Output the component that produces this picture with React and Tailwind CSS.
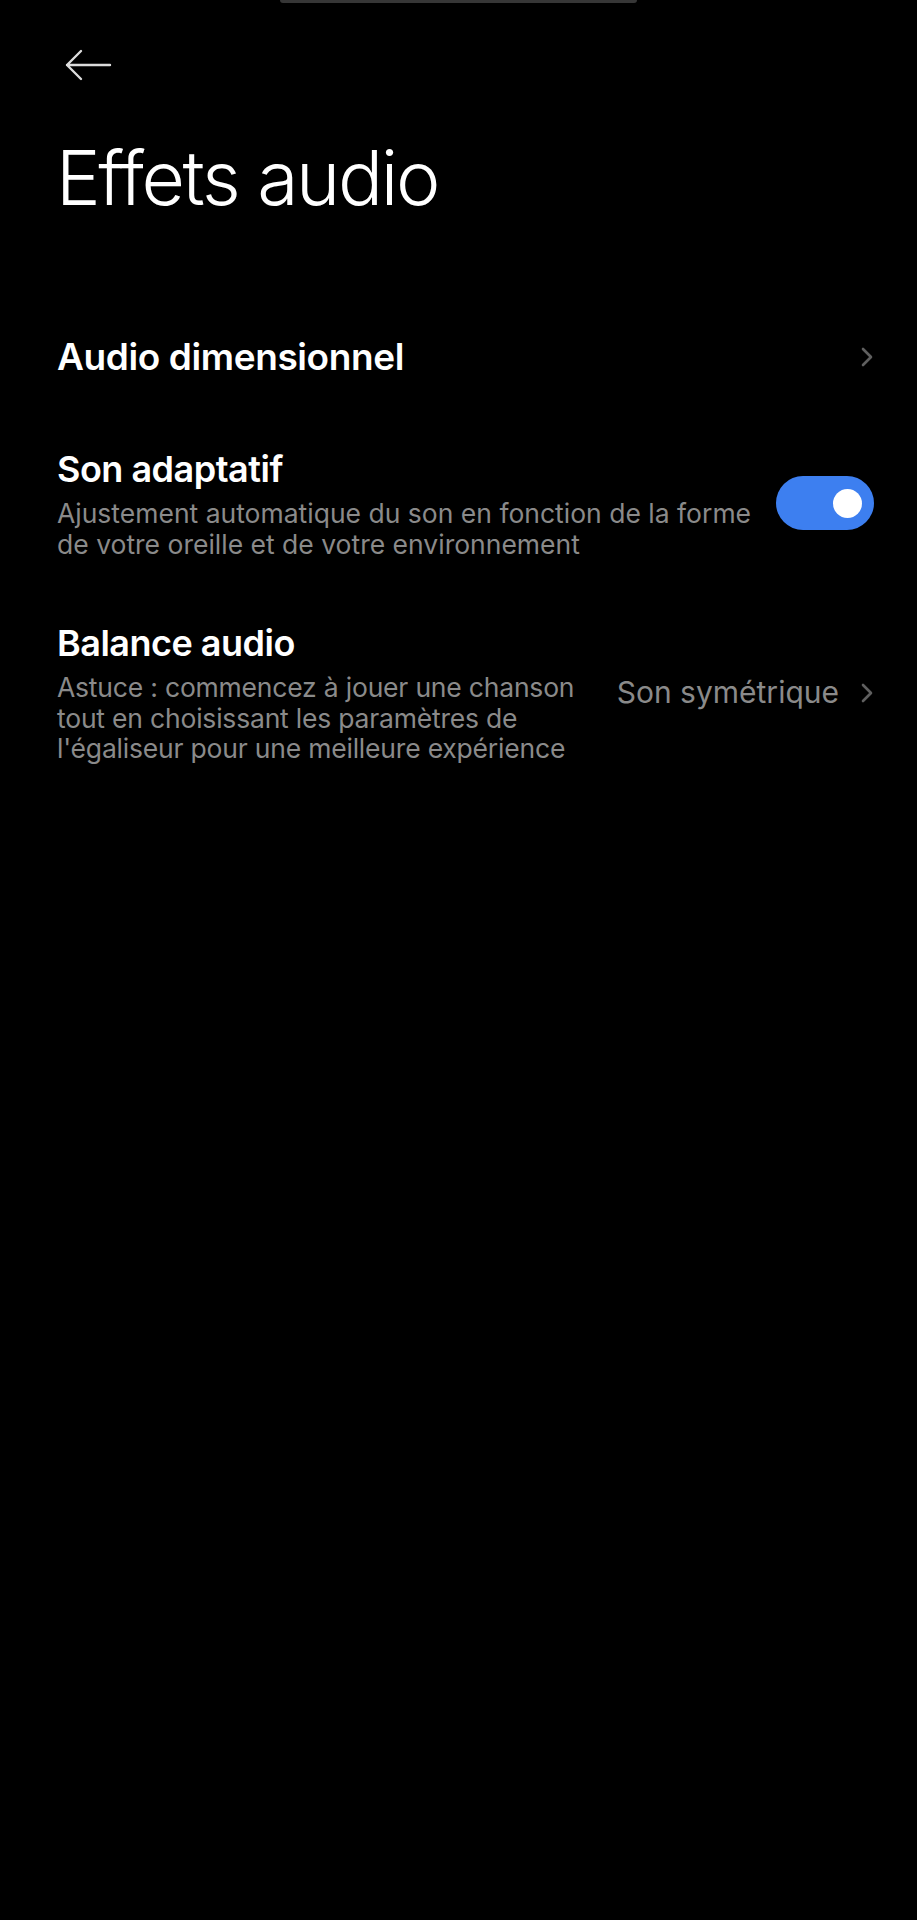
import React from "react";

function Chevron() {
  return (
    <svg width="12" height="20" viewBox="0 0 12 20" fill="none">
      <path d="M2 2 L10 10 L2 18" stroke="#5f5f5f" strokeWidth="2.6" strokeLinecap="round" strokeLinejoin="round" />
    </svg>
  );
}

export default function App() {
  return (
    <div className="min-h-[1920px] w-full bg-black text-white" style={{ fontFamily: "Inter, 'Noto Sans', sans-serif" }}>
      <div className="flex justify-center">
        <div className="w-[357px] h-[3px] bg-[#363636] rounded-b-full" />
      </div>
      <div className="pl-[64px] pt-[46px]">
        <svg width="48" height="32" viewBox="0 0 48 32" fill="none">
          <path d="M46 16 H3 M17 2 L3 16 L17 30" stroke="#dcdcdc" strokeWidth="2.4" strokeLinecap="round" strokeLinejoin="round" />
        </svg>
      </div>
      <h1 className="pl-[56px] mt-[59px] text-[75px] leading-none font-light tracking-[-2.3px]">Effets audio</h1>

      <div className="mt-[112px] flex items-center justify-between pl-[57px] pr-[44px] h-[60px]">
        <div className="text-[37px] font-semibold tracking-[-0.4px]">Audio dimensionnel</div>
        <Chevron />
      </div>

      <div className="mt-[60px] flex items-center justify-between pl-[57px] pr-[43px]">
        <div className="flex flex-col">
          <div className="text-[36px] leading-[44px] font-semibold tracking-[-0.5px]">Son adaptatif</div>
          <div className="mt-[7px] text-[26.5px] leading-[30.6px] text-[#8a8a8a]">
            Ajustement automatique du son en fonction de la forme<br />de votre oreille et de votre environnement
          </div>
        </div>
        <div className="w-[98px] h-[54px] rounded-full bg-[#3d7ff0] flex items-center justify-end pr-[12px]">
          <div className="w-[29px] h-[29px] rounded-full bg-white" />
        </div>
      </div>

      <div className="mt-[62px] flex items-center justify-between pl-[57px] pr-[44px]">
        <div className="flex flex-col">
          <div className="text-[36px] leading-[44px] font-semibold tracking-[-0.5px]">Balance audio</div>
          <div className="mt-[7px] text-[26.5px] leading-[30.6px] text-[#8a8a8a] tracking-[-0.2px]">
            Astuce : commencez à jouer une chanson<br />tout en choisissant les paramètres de<br />l'égaliseur pour une meilleure expérience
          </div>
        </div>
        <div className="flex items-center gap-[22px]">
          <span className="text-[30px] text-[#8a8a8a]">Son symétrique</span>
          <Chevron />
        </div>
      </div>
    </div>
  );
}
